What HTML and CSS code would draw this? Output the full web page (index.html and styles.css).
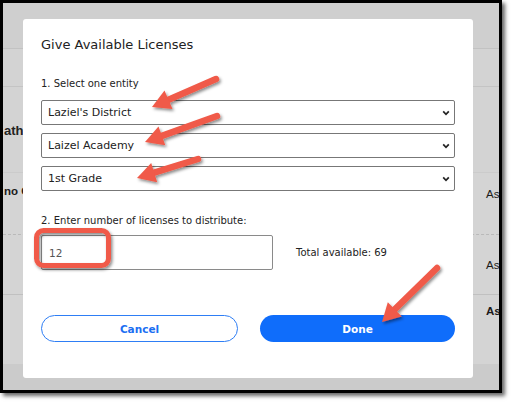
FILE: index.html
```html
<!DOCTYPE html>
<html>
<head>
<meta charset="utf-8">
<link rel="stylesheet" href="styles.css">
</head>
<body>
<div class="frame">
  <div class="bg">
    <div class="bg-head"></div>
    <div class="bg-band"></div>
    <div class="bg-row r1"><span class="bg-l big">ath</span></div>
    <div class="bg-row r2"><span class="bg-l b">no O</span><span class="bg-r">As</span></div>
    <div class="bg-row r3"><span class="bg-l"></span><span class="bg-r">As</span></div>
    <div class="bg-row r4"><span class="bg-l"></span><span class="bg-r b">As</span></div>
    <div class="bg-foot"></div>
  </div>

  <div class="modal">
    <h2 class="title">Give Available Licenses</h2>
    <p class="label l1">1. Select one entity</p>
    <div class="selects">
      <div class="select"><span>Laziel's District</span><svg class="chev" width="8" height="6" viewBox="0 0 8 6"><path d="M1.2 1.3 L4 4.3 L6.8 1.3"/></svg></div>
      <div class="select"><span>Laizel Academy</span><svg class="chev" width="8" height="6" viewBox="0 0 8 6"><path d="M1.2 1.3 L4 4.3 L6.8 1.3"/></svg></div>
      <div class="select"><span>1st Grade</span><svg class="chev" width="8" height="6" viewBox="0 0 8 6"><path d="M1.2 1.3 L4 4.3 L6.8 1.3"/></svg></div>
    </div>
    <p class="label l2">2. Enter number of licenses to distribute:</p>
    <div class="qty-row">
      <div class="input">12</div>
      <span class="total">Total available: 69</span>
    </div>
    <div class="actions">
      <button class="btn btn-outline">Cancel</button>
      <button class="btn btn-primary">Done</button>
    </div>
  </div>
</div>

<svg class="marks" width="511" height="407" viewBox="0 0 511 407">
  <defs>
    <filter id="sh" x="-30%" y="-30%" width="160%" height="160%">
      <feDropShadow dx="1.5" dy="2" stdDeviation="1.4" flood-color="#000" flood-opacity="0.45"/>
    </filter>
  </defs>
  <g filter="url(#sh)">
    <rect class="hl" x="36.5" y="230.5" width="72" height="35" rx="7"/>
    <line class="shaft" x1="216" y1="79" x2="168.5" y2="99.8"/>
    <polygon class="head" points="152,107 164.5,90.6 172.5,109"/>
    <line class="shaft" x1="217" y1="116" x2="161.9" y2="135.9"/>
    <polygon class="head" points="145,142 158.5,126.5 165.3,145.3"/>
    <line class="shaft" x1="198" y1="159" x2="154.2" y2="172.6"/>
    <polygon class="head" points="137,178 151.2,163.1 157.2,182.2"/>
    <line class="shaft" x1="437" y1="268" x2="394.8" y2="309.4"/>
    <polygon class="head" points="382,322 387.8,302.3 401.8,316.5"/>
  </g>
</svg>
</body>
</html>
```

FILE: styles.css
```css
html, body {
  margin: 0;
  padding: 0;
  background: #ffffff;
}

body {
  position: relative;
  width: 511px;
  height: 407px;
  overflow: hidden;
}

.frame {
  position: relative;
  width: 502px;
  height: 393px;
  box-sizing: border-box;
  border: 3px solid #000;
  box-shadow: 3px 3px 4px rgba(0, 0, 0, 0.6);
  background: #d4d4d4;
  overflow: hidden;
  font-family: "Liberation Sans", Arial, sans-serif;
  color: #1a1a1a;
}

/* background page, dimmed */
.bg {
  display: flex;
  flex-direction: column;
  height: 100%;
}

.bg-head {
  height: 45px;
  background: #cfcfcf;
  border-bottom: 1px solid #c2c2c2;
}

.bg-band {
  height: 37px;
  background: #d3d3d3;
  border-bottom: 1px solid #c4c4c4;
}

.bg-row {
  display: flex;
  justify-content: space-between;
  font-size: 11.5px;
}

.r1 {
  height: 85px;
  align-items: center;
  background: #d3d3d3;
  border-bottom: 1px solid #cbcbcb;
}

.r2 {
  height: 62px;
  align-items: flex-start;
  padding-top: 12px;
  box-sizing: border-box;
  border-bottom: 1px dashed #b9b9b9;
}

.r3 {
  height: 59px;
  align-items: center;
  border-bottom: 1px solid #c0c0c0;
}

.r4 {
  height: 69px;
  align-items: flex-start;
  padding-top: 10px;
  box-sizing: border-box;
}

.bg-foot {
  flex: 1;
  background: #cbcbcb;
}

.bg-l {
  padding-left: 1px;
}

.bg-r {
  width: 13px;
  white-space: nowrap;
}

.r2 .bg-r { margin-top: 3px; }

.big {
  font-size: 13px;
  font-weight: bold;
  color: #222;
  margin-top: 2px;
}

.b {
  font-weight: bold;
}

/* modal */
.modal {
  position: absolute;
  left: 20px;
  top: 16px;
  width: 450px;
  height: 359px;
  box-sizing: border-box;
  padding: 18px 18px 0 18px;
  background: #fff;
  border-radius: 3px;
  font-family: "DejaVu Sans", sans-serif;
  color: #222;
}

.title {
  margin: 0;
  font-size: 13px;
  font-weight: normal;
  line-height: 16px;
}

.label {
  margin: 0;
  font-size: 10px;
  line-height: 14px;
}

.l1 { margin-top: 24px; }
.l2 { margin-top: 23px; }

.selects {
  margin-top: 9px;
  display: flex;
  flex-direction: column;
  gap: 8px;
}

.select {
  height: 25px;
  box-sizing: border-box;
  border: 1px solid #777;
  border-radius: 2px;
  display: flex;
  align-items: center;
  justify-content: space-between;
  padding: 0 4px 0 6px;
  font-size: 11px;
}

.chev path {
  fill: none;
  stroke: #222;
  stroke-width: 1.7;
}

.qty-row {
  margin-top: 7px;
  display: flex;
  align-items: center;
  gap: 23px;
}

.input {
  width: 232px;
  height: 35px;
  box-sizing: border-box;
  border: 1px solid #8a8a8a;
  border-radius: 2px;
  padding-left: 7px;
  display: flex;
  align-items: center;
  font-size: 10.5px;
  color: #555;
}

.total {
  font-size: 10px;
}

.actions {
  margin-top: 45px;
  display: flex;
  gap: 22px;
}

.btn {
  flex: 1;
  height: 27px;
  border-radius: 14px;
  font-family: "DejaVu Sans", sans-serif;
  font-weight: bold;
  font-size: 10.5px;
  padding: 0;
}

.btn-outline {
  background: #fff;
  border: 1.5px solid #2e7ef5;
  color: #1b6ff2;
}

.btn-primary {
  background: #0f6dfb;
  border: none;
  color: #fff;
}

/* annotations */
.marks {
  position: absolute;
  left: 0;
  top: 0;
  pointer-events: none;
}

.hl {
  fill: none;
  stroke: #f05a48;
  stroke-width: 5;
}

.shaft {
  stroke: #f05a48;
  stroke-width: 6.5;
  stroke-linecap: round;
}

.head {
  fill: #f05a48;
}
```
